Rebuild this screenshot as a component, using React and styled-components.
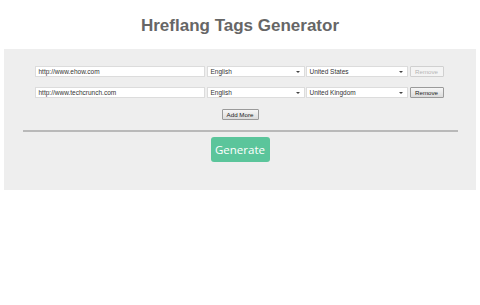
import React from 'react'
import styled, { createGlobalStyle } from 'styled-components'

const Global = createGlobalStyle`
  body {
    margin: 0;
    background: #ffffff;
    font-family: "Liberation Sans", Arial, sans-serif;
  }
`

const Header = styled.div`
  height: 49px;
  display: flex;
  justify-content: center;
  align-items: center;
`

const Title = styled.h1`
  margin: 0;
  padding-top: 2px;
  font-size: 17px;
  font-weight: bold;
  color: #666666;
`

const Panel = styled.div`
  margin: 0 4px;
  height: 141px;
  box-sizing: border-box;
  padding-top: 17px;
  background: #eeeeee;
  display: flex;
  flex-direction: column;
  align-items: center;
`

const Rows = styled.div`
  display: flex;
  flex-direction: column;
  gap: 10px;
  margin-right: 2px;
`

const Row = styled.div`
  display: flex;
  align-items: center;
  height: 11px;
`

const UrlBox = styled.div`
  width: 170px;
  height: 11px;
  box-sizing: border-box;
  background: #fff;
  border: 1px solid #dcdcdc;
  padding: 0 3px;
  font-size: 6.5px;
  line-height: 9px;
  color: #333;
  margin-right: 2px;
`

const SelectBox = styled.div`
  width: ${p => p.$w}px;
  height: 11px;
  box-sizing: border-box;
  background: #fff;
  border: 1px solid #dcdcdc;
  padding: 0 4px 0 3px;
  margin-right: ${p => p.$gap}px;
  display: flex;
  align-items: center;
  justify-content: space-between;
  font-size: 6.5px;
  color: #333;
`

const Caret = styled.span`
  width: 0;
  height: 0;
  border-left: 2px solid transparent;
  border-right: 2px solid transparent;
  border-top: 2px solid #444;
`

const SmallButton = styled.div`
  height: 11px;
  box-sizing: border-box;
  width: ${p => p.$w}px;
  display: flex;
  align-items: center;
  justify-content: center;
  white-space: nowrap;
  font-size: 6.2px;
  border: 1px solid ${p => (p.$disabled ? '#d0d0d0' : '#9a9a9a')};
  color: ${p => (p.$disabled ? '#b5b5b5' : '#222')};
  background: ${p =>
    p.$disabled ? '#f4f4f4' : 'linear-gradient(#f6f6f6, #dcdcdc)'};
  border-radius: 1px;
`

const AddWrap = styled.div`
  margin-top: 11px;
`

const Divider = styled.div`
  margin-top: 10px;
  width: 435px;
  height: 2px;
  background: #b9b9b9;
`

const GenerateButton = styled.div`
  margin-top: 5px;
  width: 59px;
  height: 25px;
  border-radius: 3px;
  background: #5bc59b;
  color: #ffffff;
  font-family: "Open Sans", "Liberation Sans", sans-serif;
  font-size: 11.5px;
  display: flex;
  align-items: center;
  justify-content: center;
`

const rows = [
  { url: 'http://www.ehow.com', lang: 'English', country: 'United States', disabled: true },
  { url: 'http://www.techcrunch.com', lang: 'English', country: 'United Kingdom', disabled: false },
]

export default function App() {
  return (
    <>
      <Global />
      <Header>
        <Title>Hreflang Tags Generator</Title>
      </Header>
      <Panel>
        <Rows>
          {rows.map((r, i) => (
            <Row key={i}>
              <UrlBox>{r.url}</UrlBox>
              <SelectBox $w={98} $gap={1}>
                <span>{r.lang}</span>
                <Caret />
              </SelectBox>
              <SelectBox $w={102} $gap={2}>
                <span>{r.country}</span>
                <Caret />
              </SelectBox>
              <SmallButton $w={34} $disabled={r.disabled}>Remove</SmallButton>
            </Row>
          ))}
        </Rows>
        <AddWrap>
          <SmallButton $w={37}>Add More</SmallButton>
        </AddWrap>
        <Divider />
        <GenerateButton>Generate</GenerateButton>
      </Panel>
    </>
  )
}
